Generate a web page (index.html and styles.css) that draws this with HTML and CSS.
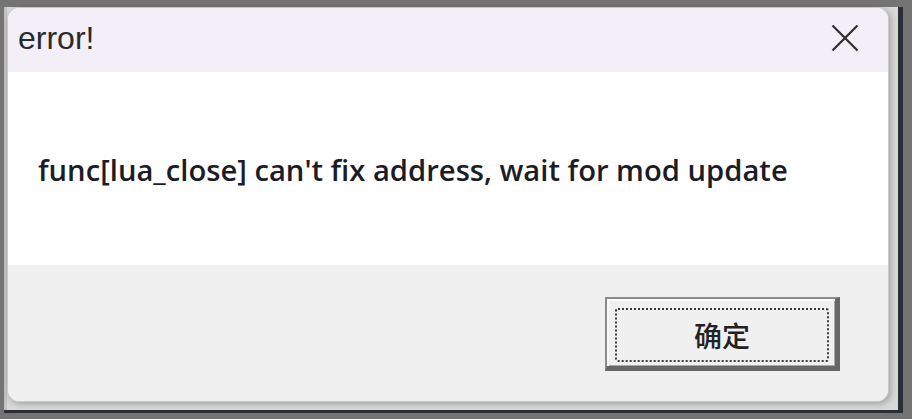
FILE: index.html
```html
<!DOCTYPE html>
<html lang="zh">
<head>
<meta charset="utf-8">
<title>error!</title>
<link rel="stylesheet" href="styles.css">
</head>
<body>
<div class="backdrop">
  <div class="dialog">
    <div class="titlebar">
      <span class="title">error!</span>
      <svg class="close" width="28" height="28" viewBox="0 0 28 28" aria-label="close">
        <path d="M1.5 1.5 L26.5 26.5 M26.5 1.5 L1.5 26.5" stroke="#2e2e2e" stroke-width="2.2" fill="none"/>
      </svg>
    </div>
    <div class="content">
      <p class="message">func[lua_close] can't fix address, wait for mod update</p>
    </div>
    <div class="footer">
      <button class="ok"><span class="focus">确定</span></button>
    </div>
  </div>
</div>
</body>
</html>
```
FILE: styles.css
```css
html, body {
  margin: 0;
  padding: 0;
}
body {
  background: #747474;
  width: 912px;
  height: 419px;
  overflow: hidden;
  padding: 7px 0 0 4px;
  box-sizing: border-box;
}
.backdrop {
  width: 899px;
  height: 406px;
  box-sizing: border-box;
  background: #d9d9d9;
  border-right: 5px solid #2b2e36;
  border-bottom: 3px solid #2b2e36;
  padding-left: 3px;
  box-shadow: inset 3px 0 0 #c2c2c2;
}
.dialog {
  width: 882px;
  height: 395px;
  box-sizing: border-box;
  border: 1px solid #c9c9c9;
  border-radius: 12px;
  overflow: hidden;
  display: flex;
  flex-direction: column;
  box-shadow: 2px 2px 6px rgba(0, 0, 0, 0.25);
  background: #f0f0f0;
}
.titlebar {
  height: 64px;
  flex: none;
  background: #f3eff8;
  display: flex;
  align-items: center;
  justify-content: space-between;
  padding: 0 29px 0 10px;
}
.title {
  font-family: "Liberation Sans", Arial, sans-serif;
  font-size: 32px;
  color: #2a2a2a;
  margin-top: -3px;
}
.close {
  display: block;
  margin-top: -4px;
}
.content {
  height: 193px;
  flex: none;
  background: #fff;
  display: flex;
  align-items: center;
  padding-left: 30px;
}
.message {
  margin: 0;
  font-family: "Open Sans", "Noto Sans", sans-serif;
  font-size: 29.2px;
  font-weight: 600;
  color: #1c1c26;
  margin-top: 2px;
}
.footer {
  flex: 1;
  background: #f0f0f0;
  display: flex;
  justify-content: flex-end;
  align-items: flex-start;
  padding: 32px 48px 0 0;
}
.ok {
  width: 235px;
  height: 74px;
  box-sizing: border-box;
  background: #f0f0f0;
  border-style: solid;
  border-width: 2px 5px 5px 2px;
  border-color: #8c8c8c #676767 #676767 #8c8c8c;
  box-shadow: inset 2px 2px 0 #fbfbfb, inset -1px -1px 0 #a8a8a8;
  padding: 9px 6px 4px 8px;
  margin: 0;
  display: flex;
}
.focus {
  flex: 1;
  border: 2px dotted #3a3a3a;
  border-radius: 3px;
  display: flex;
  align-items: center;
  justify-content: center;
  font-family: "Noto Sans CJK SC", sans-serif;
  font-size: 28px;
  font-weight: 500;
  color: #222;
}
```
